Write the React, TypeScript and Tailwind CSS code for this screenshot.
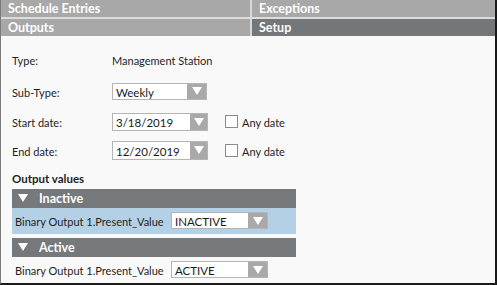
import React from "react";

const font = { fontFamily: 'Lato, "Noto Sans", sans-serif' };

function Arrow() {
  return (
    <svg width="10" height="8" viewBox="0 0 10 8">
      <polygon points="0,0 10,0 5,8" fill="#ffffff" />
    </svg>
  );
}

function Select({ value, w, h, btn }: { value: string; w: string; h: string; btn: string }) {
  return (
    <div className={`flex ${w} ${h} border border-[#b5b5b5] bg-white`}>
      <div className="flex-1 flex items-center pl-[3px] pt-[2px] text-[11.5px] text-[#1a1a1a] leading-none whitespace-nowrap">{value}</div>
      <div className={`${btn} bg-[#a9a9a9] flex items-center justify-center`}>
        <Arrow />
      </div>
    </div>
  );
}

function Check() {
  return <div className="w-[13px] h-[13px] border border-[#8a8a8a] bg-white" />;
}

export default function App() {
  return (
    <div
      style={font}
      className="w-[497px] h-[285px] bg-[#f9f9f9] border-l border-l-[#7a7a7a] border-r-2 border-b-2 border-r-[#1a1a1a] border-b-[#1a1a1a] flex flex-col overflow-hidden text-[#1f1f1f] leading-none"
    >
      <div className="flex h-[18px] bg-[#a8a8a8]">
        <div className="w-[249px] flex items-center pl-[7px] pt-[2px] text-white font-bold text-[12.5px]">Schedule Entries</div>
        <div className="w-[2px] bg-[#d8d8d8]" />
        <div className="flex-1 flex items-center pl-[7px] pt-[2px] text-white font-bold text-[12.5px]">Exceptions</div>
      </div>
      <div className="h-[2px] bg-[#dcdcdc]" />
      <div className="flex h-[18px] bg-[#a8a8a8]">
        <div className="w-[249px] flex items-center pl-[7px] pt-[2px] text-white font-bold text-[12.5px]">Outputs</div>
        <div className="w-[2px] bg-[#d8d8d8]" />
        <div className="flex-1 flex items-center pl-[7px] pt-[2px] text-white font-bold text-[12.5px] bg-[#737779]">Setup</div>
      </div>

      <div className="flex flex-col pl-[11px] text-[11px] whitespace-nowrap">
        <div className="flex items-center h-[16px] mt-[16px] pt-[2px]">
          <div className="w-[100px]">Type:</div>
          <div>Management Station</div>
        </div>
        <div className="flex items-center h-[17px] mt-[15px]">
          <div className="w-[100px] pt-[2px]">Sub-Type:</div>
          <Select value="Weekly" w="w-[95px]" h="h-[17px]" btn="w-[19px]" />
        </div>
        <div className="flex items-center h-[18px] mt-[13px]">
          <div className="w-[100px] pt-[2px]">Start date:</div>
          <Select value="3/18/2019" w="w-[96px]" h="h-[18px]" btn="w-[17px]" />
          <div className="ml-[17px]"><Check /></div>
          <div className="ml-[4px] pt-[2px]">Any date</div>
        </div>
        <div className="flex items-center h-[19px] mt-[10px]">
          <div className="w-[100px] pt-[2px]">End date:</div>
          <Select value="12/20/2019" w="w-[96px]" h="h-[19px]" btn="w-[17px]" />
          <div className="ml-[17px]"><Check /></div>
          <div className="ml-[4px] pt-[2px]">Any date</div>
        </div>
        <div className="flex items-center h-[16px] mt-[10px] pt-[2px] font-bold text-[11.5px]">Output values</div>

        <div className="w-[284px] mt-[3px] flex flex-col">
          <div className="h-[19px] bg-[#76797c] flex items-center pl-[6px] text-white font-bold text-[12.5px]">
            <Arrow />
            <span className="ml-[11px] pt-[2px]">Inactive</span>
          </div>
          <div className="h-[26px] bg-[#b4d0e5] flex items-center pl-[3px]">
            <div className="w-[156px] pt-[2px]">Binary Output 1.Present_Value</div>
            <Select value="INACTIVE" w="w-[97px]" h="h-[17px]" btn="w-[19px]" />
          </div>
          <div className="h-[19px] mt-[4px] bg-[#76797c] flex items-center pl-[6px] text-white font-bold text-[12.5px]">
            <Arrow />
            <span className="ml-[11px] pt-[2px]">Active</span>
          </div>
          <div className="h-[26px] flex items-center pl-[3px]">
            <div className="w-[156px] pt-[2px]">Binary Output 1.Present_Value</div>
            <Select value="ACTIVE" w="w-[97px]" h="h-[17px]" btn="w-[19px]" />
          </div>
        </div>
      </div>
    </div>
  );
}
